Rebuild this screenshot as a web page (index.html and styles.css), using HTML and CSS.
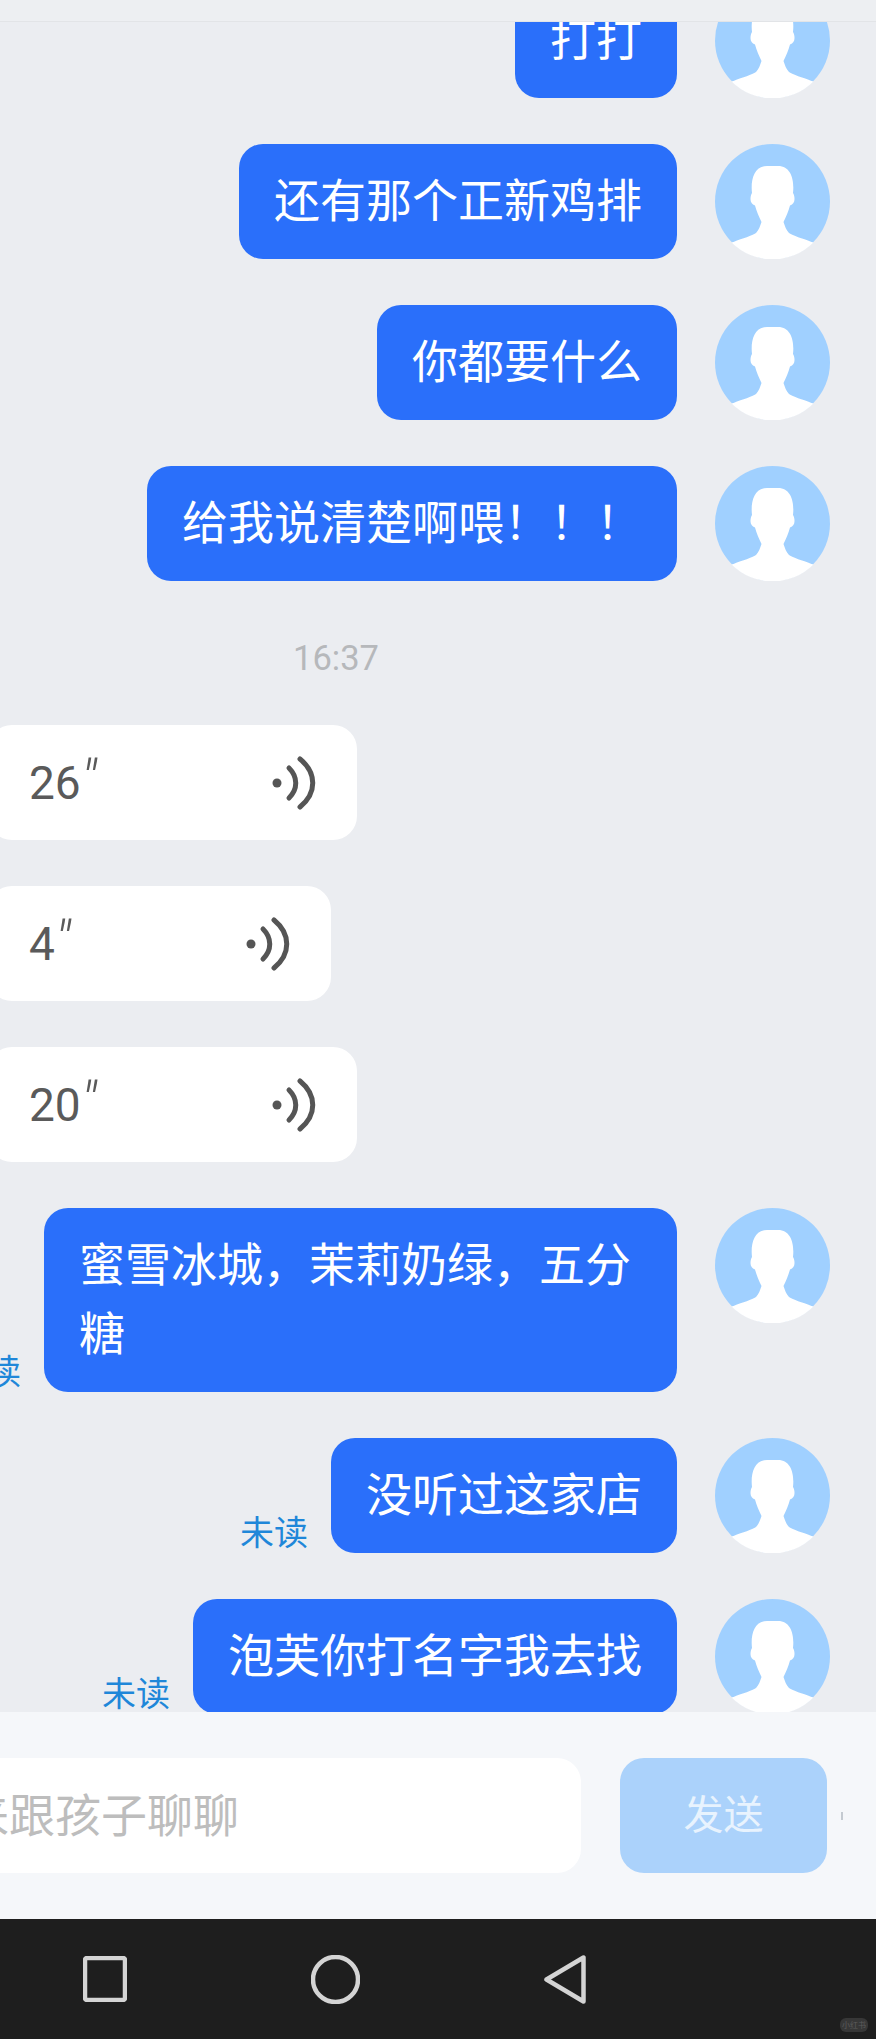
FILE: index.html
```html
<!DOCTYPE html>
<html lang="zh-CN">
	<head>
		<meta charset="utf-8" />
		<title>聊天</title>
		<meta name="viewport" content="width=device-width, initial-scale=1.0">
		<link rel="stylesheet" href="styles.css">
	</head>
	<body>
		<svg class="defs" width="0" height="0">
			<symbol id="avatar" viewBox="0 0 115 115">
				<circle cx="57.5" cy="57.5" r="57.5" fill="#a0d0ff"/>
				<path fill="#fff" d="M16.5 98.5L18.5 98C28 94 37 92 41 89C44 86 45 82 46.5 78C44 73 41.5 67 40 61.5C37 60.5 35.5 58 35.5 55C35.5 52.5 36 50.5 37 49C35.5 36 39 22 52 22L63 22C76 22 79.5 36 78 49C79 50.5 79.5 52.5 79.5 55C79.5 58 78 60.5 75 61.5C73.5 67 71 73 68.5 78C70 82 71 86 74 89C78 92 87 94 96.5 98L98.5 98.5A58 58 0 0 1 16.5 98.5Z"/>
			</symbol>
			<symbol id="voice" viewBox="0 0 45 54">
				<circle cx="5" cy="27" r="4.5" fill="#555"/>
				<path fill="none" stroke="#555" stroke-width="5" stroke-linecap="round" d="M17 12C26 21 26 33 17 42"/>
				<path fill="none" stroke="#555" stroke-width="5" stroke-linecap="round" d="M28 3C45 17 45 37 28 51"/>
			</symbol>
		</svg>

		<div id="main">
			<div class="topline"></div>
			<div id="chat">
				<div class="row">
					<div class="bubble">打打</div>
					<svg class="avatar"><use href="#avatar"/></svg>
				</div>
				<div class="row">
					<div class="bubble">还有那个正新鸡排</div>
					<svg class="avatar"><use href="#avatar"/></svg>
				</div>
				<div class="row">
					<div class="bubble">你都要什么</div>
					<svg class="avatar"><use href="#avatar"/></svg>
				</div>
				<div class="row">
					<div class="bubble">给我说清楚啊喂！！！</div>
					<svg class="avatar"><use href="#avatar"/></svg>
				</div>

				<div class="time">16:37</div>

				<div class="voice long">
					<span class="secs">26<i>″</i></span>
					<svg class="wave"><use href="#voice"/></svg>
				</div>
				<div class="voice short">
					<span class="secs">4<i>″</i></span>
					<svg class="wave"><use href="#voice"/></svg>
				</div>
				<div class="voice long">
					<span class="secs">20<i>″</i></span>
					<svg class="wave"><use href="#voice"/></svg>
				</div>

				<div class="row">
					<span class="unread">未读</span>
					<div class="bubble">蜜雪冰城，茉莉奶绿，五分糖</div>
					<svg class="avatar"><use href="#avatar"/></svg>
				</div>
				<div class="row">
					<span class="unread">未读</span>
					<div class="bubble">没听过这家店</div>
					<svg class="avatar"><use href="#avatar"/></svg>
				</div>
				<div class="row">
					<span class="unread">未读</span>
					<div class="bubble">泡芙你打名字我去找</div>
					<svg class="avatar"><use href="#avatar"/></svg>
				</div>
			</div>

			<div id="inputBar">
				<div class="input">快来跟孩子聊聊</div>
				<div class="send">发送</div>
				<div class="speck"></div>
			</div>

			<div id="navBar">
				<svg class="navSquare" viewBox="0 0 44 46"><rect x="2" y="2" width="40" height="42" rx="2"/></svg>
				<svg class="navCircle" viewBox="0 0 49 49"><circle cx="24.5" cy="24.5" r="22.5"/></svg>
				<svg class="navBack" viewBox="0 0 42 49"><path d="M39.5 2.5V46.5L2.5 24.5Z"/></svg>
				<span class="mark">小红书</span>
			</div>
		</div>
	</body>
</html>
```

FILE: styles.css
```css
body, html {
	margin:0;
	padding:0;
	background-color:#ebedf1;
	font-family:"Noto Sans CJK SC", "Noto Sans", sans-serif;
}
.defs {
	display:block;
	position:absolute;
}
#main {
	position:relative;
	width:876px;
	height:2039px;
	overflow:hidden;
}
.topline {
	height:22px;
	background-color:#edeff2;
	border-bottom:1px solid #e2e4e7;
	box-sizing:border-box;
}
#chat {
	display:flex;
	flex-direction:column;
	gap:46px;
	height:1690px;
	overflow:hidden;
}
.row {
	display:flex;
	flex:none;
	justify-content:flex-end;
	padding-right:46px;
}
.row:first-child {
	margin-top:-39px;
}
.bubble {
	flex:none;
	box-sizing:border-box;
	max-width:633px;
	padding:19px 35px 27px;
	margin-right:38px;
	border-radius:24px;
	background-color:#2a6ffa;
	color:#fff;
	font-size:46px;
	line-height:69px;
}
.avatar {
	flex:none;
	width:115px;
	height:115px;
}
.unread {
	flex:none;
	align-self:flex-end;
	margin-right:23px;
	margin-bottom:-1px;
	color:#1f87d9;
	font-size:34px;
	line-height:46px;
}
.time {
	flex:none;
	height:52px;
	padding-top:5px;
	box-sizing:border-box;
	text-align:center;
	width:672px;
	color:#b6b8bb;
	font-family:Roboto, sans-serif;
	font-size:34.5px;
	line-height:52px;
}
.voice {
	display:flex;
	flex:none;
	align-items:center;
	justify-content:space-between;
	box-sizing:border-box;
	height:115px;
	margin-left:-12px;
	padding:0 40px 0 41px;
	border-radius:24px;
	background-color:#fff;
}
.long {
	width:369px;
}
.short {
	width:343px;
}
.secs {
	color:#5a5a5a;
	font-family:Roboto, sans-serif;
	font-size:46px;
	line-height:54px;
}
.secs i {
	font-size:56px;
	font-weight:300;
	line-height:0;
}
.wave {
	width:45px;
	height:54px;
}
#inputBar {
	display:flex;
	align-items:center;
	height:207px;
	box-sizing:border-box;
	padding-bottom:46px;
	padding-top:46px;
	background-color:#f5f7fa;
}
.input {
	flex:none;
	box-sizing:border-box;
	width:696px;
	height:115px;
	margin-left:-115px;
	padding-left:32px;
	border-radius:24px;
	background-color:#fff;
	color:#bdbdbd;
	font-size:46px;
	line-height:108px;
}
.send {
	flex:none;
	width:207px;
	height:115px;
	margin-left:39px;
	border-radius:24px;
	background-color:#abd2fb;
	color:#e8f3fe;
	font-size:40px;
	line-height:109px;
	text-align:center;
}
.speck {
	width:2px;
	height:8px;
	margin-left:14px;
	background-color:#c4cad1;
}
#navBar {
	position:relative;
	display:flex;
	align-items:center;
	gap:184px;
	height:120px;
	padding-left:83px;
	background-color:#1e1e1e;
}
#navBar svg {
	flex:none;
	fill:none;
	stroke:#d4d4d4;
	stroke-width:4.5;
	stroke-linejoin:round;
}
.navSquare {
	width:44px;
	height:46px;
}
.navCircle {
	width:49px;
	height:49px;
}
.navBack {
	width:42px;
	height:49px;
}
.mark {
	position:absolute;
	right:8px;
	bottom:7px;
	width:28px;
	height:14px;
	border-radius:6px;
	background-color:#373737;
	color:#5c5c5c;
	font-size:8px;
	line-height:14px;
	text-align:center;
}
```
